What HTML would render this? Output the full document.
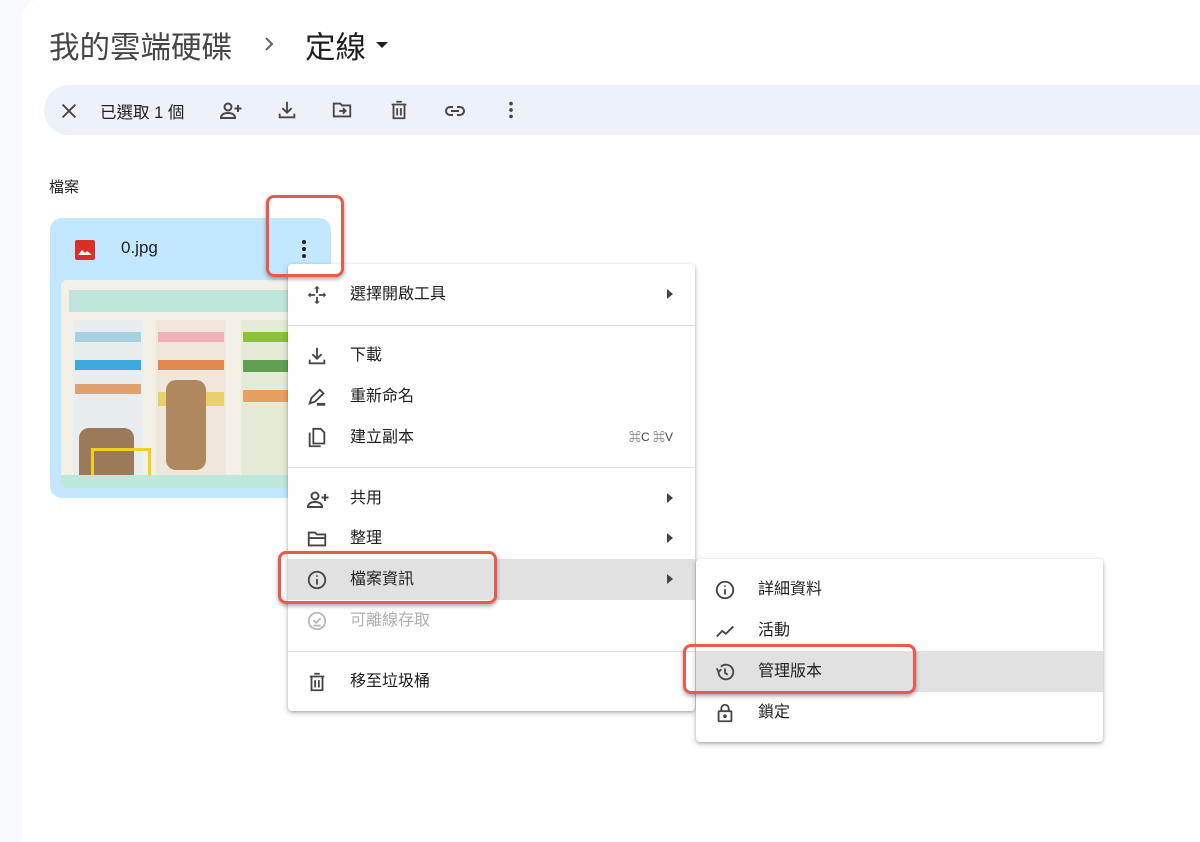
<!DOCTYPE html>
<html><head><meta charset="utf-8"><style>
*{margin:0;padding:0;box-sizing:border-box}
body{width:1200px;height:842px;overflow:hidden;background:#f8fafd;font-family:"Liberation Sans","Noto Sans CJK TC",sans-serif;color:#1f1f1f;position:relative}
.main{position:absolute;left:22px;top:0;right:0;bottom:0;background:#fff;border-top-left-radius:18px}
.abs{position:absolute}
.bc{position:absolute;top:23px;font-size:30.5px;color:#444746}
.tb{position:absolute;left:44px;top:85px;right:0;height:50px;background:#edf2fa;border-radius:25px 0 0 25px}
.ic{position:absolute}
svg{display:block}
.menu{position:absolute;background:#fff;border-radius:4px;box-shadow:0 2px 6px rgba(0,0,0,.25),0 1px 2px rgba(0,0,0,.15)}
.it{position:absolute;left:0;right:0;height:41px;font-size:16px;line-height:41px}
.it .t{position:absolute;left:62px}
.it svg{position:absolute;left:18px;top:10px}
.hl{background:#e1e1e1}
.div{position:absolute;left:0;right:0;height:1px;background:#dadce0}
.arr{position:absolute;right:22px;top:15px;width:0;height:0;border-left:6px solid #444;border-top:5px solid transparent;border-bottom:5px solid transparent}
.red{position:absolute;border:3px solid #ea5a4c;border-radius:8px;box-shadow:0 2px 4px rgba(0,0,0,.35)}
</style></head><body>
<div class="main"></div>
<div class="bc" style="left:49px">我的雲端硬碟</div>
<svg class="ic" style="left:262px;top:36px" width="14" height="16" viewBox="0 0 14 16"><path d="M4 2l6 6-6 6" fill="none" stroke="#5f6368" stroke-width="2"/></svg>
<div class="bc" style="left:305px;color:#1f1f1f">定線</div>
<div class="abs" style="left:376px;top:42px;border-top:6px solid #1f1f1f;border-left:6px solid transparent;border-right:6px solid transparent"></div>

<div class="tb"></div>
<svg class="ic" style="left:58px;top:100px" width="22" height="22" viewBox="0 0 24 24"><path d="M5 5L19 19M19 5L5 19" stroke="#444746" stroke-width="2"/></svg>
<div class="abs" style="left:100px;top:99px;font-size:16.5px;color:#1f1f1f">已選取 1 個</div>
<svg class="ic" style="left:219px;top:99px" width="24" height="24" viewBox="0 0 24 24" fill="none" stroke="#444746" stroke-width="2"><circle cx="9" cy="8" r="3.5"/><path d="M2 19c0-3.5 3-5 7-5s7 1.5 7 5z"/><path d="M19 6v7M15.5 9.5h7"/></svg>
<svg class="ic" style="left:276px;top:99px" width="22" height="22" viewBox="0 0 24 24" fill="none" stroke="#444746" stroke-width="2"><path d="M12 3v12M7 10l5 5 5-5M4 16v4h16v-4"/></svg>
<svg class="ic" style="left:331px;top:99px" width="22" height="22" viewBox="0 0 24 24" fill="none" stroke="#444746" stroke-width="2"><path d="M3 5h7l2 2h9v12H3z"/><path d="M9 13h6M13 10l3 3-3 3"/></svg>
<svg class="ic" style="left:388px;top:99px" width="22" height="22" viewBox="0 0 24 24" fill="none" stroke="#444746" stroke-width="2"><path d="M4 6h16M9 3h6M6 6v15h12V6M10 10v8M14 10v8"/></svg>
<svg class="ic" style="left:443px;top:99px" width="24" height="24" viewBox="0 0 24 24" fill="none" stroke="#444746" stroke-width="2"><path d="M10 8H7a4 4 0 000 8h3M14 8h3a4 4 0 010 8h-3M8 12h8"/></svg>
<svg class="ic" style="left:500px;top:99px" width="22" height="22" viewBox="0 0 24 24" fill="#444746"><circle cx="12" cy="5" r="2"/><circle cx="12" cy="12" r="2"/><circle cx="12" cy="19" r="2"/></svg>

<div class="abs" style="left:49px;top:176px;font-size:15px;color:#1f1f1f">檔案</div>

<div class="abs" style="left:50px;top:218px;width:281px;height:280px;background:#c2e7ff;border-radius:12px"></div>
<svg class="ic" style="left:73px;top:238px" width="24" height="24" viewBox="0 0 24 24"><rect x="2" y="2" width="20" height="20" rx="2" fill="#d93025"/><path d="M5 17l4-5 3 3 2-2 5 4z" fill="#fff"/></svg>
<div class="abs" style="left:121px;top:238px;font-size:17px">0.jpg</div>
<svg class="ic" style="left:292px;top:237px" width="24" height="24" viewBox="0 0 24 24" fill="#1f1f1f"><circle cx="12" cy="5" r="2"/><circle cx="12" cy="12" r="2"/><circle cx="12" cy="19" r="2"/></svg>
<div class="abs" style="left:61px;top:280px;width:240px;height:208px;border-radius:6px;overflow:hidden;background:#f3f0e8">
 <div class="abs" style="left:8px;top:10px;width:232px;height:22px;background:#bfe6dc"></div>
 <div class="abs" style="left:12px;top:40px;width:70px;height:170px;background:#e8eef0"></div>
 <div class="abs" style="left:95px;top:40px;width:70px;height:170px;background:#efe6dc"></div>
 <div class="abs" style="left:180px;top:40px;width:60px;height:170px;background:#e4ecd8"></div>
 <div class="abs" style="left:14px;top:52px;width:66px;height:10px;background:#a8d0e0"></div>
 <div class="abs" style="left:14px;top:80px;width:66px;height:10px;background:#3ea9e0"></div>
 <div class="abs" style="left:14px;top:104px;width:66px;height:10px;background:#e0a070"></div>
 <div class="abs" style="left:97px;top:52px;width:66px;height:10px;background:#f0b0b8"></div>
 <div class="abs" style="left:97px;top:80px;width:66px;height:10px;background:#e08a50"></div>
 <div class="abs" style="left:97px;top:112px;width:66px;height:14px;background:#e8d070"></div>
 <div class="abs" style="left:182px;top:52px;width:58px;height:10px;background:#8cc040"></div>
 <div class="abs" style="left:182px;top:80px;width:58px;height:12px;background:#60a050"></div>
 <div class="abs" style="left:182px;top:110px;width:58px;height:12px;background:#e8a060"></div>
 <div class="abs" style="left:105px;top:100px;width:40px;height:90px;background:#b08860;border-radius:10px"></div>
 <div class="abs" style="left:18px;top:148px;width:55px;height:60px;background:#9a7a58;border-radius:10px"></div>
 <div class="abs" style="left:30px;top:168px;width:60px;height:30px;border:3px solid #f0d020"></div>
 <div class="abs" style="left:0;top:195px;width:240px;height:13px;background:#bfe8dc"></div>
</div>

<div class="menu" style="left:288px;top:264px;width:407px;height:447px">
 <div class="it" style="top:10px"><svg width="22" height="22" viewBox="0 0 24 24" fill="#444746"><path d="M12 2l3 3h-2v5h-2V5H9zM12 22l-3-3h2v-5h2v5h2zM2 12l3-3v2h5v2H5v2zM22 12l-3 3v-2h-5v-2h5V9z"/></svg><span class="t">選擇開啟工具</span><div class="arr"></div></div>
 <div class="div" style="top:61px"></div>
 <div class="it" style="top:71px"><svg width="22" height="22" viewBox="0 0 24 24" fill="none" stroke="#444746" stroke-width="2"><path d="M12 3v12M7 10l5 5 5-5M4 16v4h16v-4"/></svg><span class="t">下載</span></div>
 <div class="it" style="top:112px"><svg width="22" height="22" viewBox="0 0 24 24" fill="none" stroke="#444746" stroke-width="2"><path d="M4 19l2-6L15 4l4 4-9 9z"/><path d="M12 20h9" stroke-width="3"/></svg><span class="t">重新命名</span></div>
 <div class="it" style="top:153px"><svg width="22" height="22" viewBox="0 0 24 24" fill="none" stroke="#444746" stroke-width="2"><path d="M4 6v15h12"/><path d="M8 2h8l4 4v12H8z"/></svg><span class="t">建立副本</span><span style="position:absolute;right:22px;font-size:12px;color:#444">⌘C ⌘V</span></div>
 <div class="div" style="top:203px"></div>
 <div class="it" style="top:214px"><svg width="24" height="24" viewBox="0 0 24 24" fill="none" stroke="#444746" stroke-width="2"><circle cx="9" cy="8" r="3.5"/><path d="M2 19c0-3.5 3-5 7-5s7 1.5 7 5z"/><path d="M19 6v7M15.5 9.5h7"/></svg><span class="t">共用</span><div class="arr"></div></div>
 <div class="it" style="top:254px"><svg width="22" height="22" viewBox="0 0 24 24" fill="none" stroke="#444746" stroke-width="2"><path d="M3 5h7l2 2h9v12H3z"/><path d="M3 11h18"/></svg><span class="t">整理</span><div class="arr"></div></div>
 <div class="it hl" style="top:295px"><svg width="22" height="22" viewBox="0 0 24 24" fill="none" stroke="#444746" stroke-width="2"><circle cx="12" cy="12" r="9"/><path d="M12 11v6M12 7v1.5"/></svg><span class="t">檔案資訊</span><div class="arr"></div></div>
 <div class="it" style="top:336px;color:#b0b0b0"><svg width="22" height="22" viewBox="0 0 24 24" fill="none" stroke="#b8b8b8" stroke-width="2"><circle cx="12" cy="12" r="9"/><path d="M8 11l3 3 5-5M8 17h8"/></svg><span class="t">可離線存取</span></div>
 <div class="div" style="top:387px"></div>
 <div class="it" style="top:397px"><svg width="22" height="22" viewBox="0 0 24 24" fill="none" stroke="#444746" stroke-width="2"><path d="M4 6h16M9 3h6M6 6v15h12V6M10 10v8M14 10v8"/></svg><span class="t">移至垃圾桶</span></div>
</div>

<div class="menu" style="left:696px;top:559px;width:407px;height:183px">
 <div class="it" style="top:10px"><svg width="22" height="22" viewBox="0 0 24 24" fill="none" stroke="#444746" stroke-width="2"><circle cx="12" cy="12" r="9"/><path d="M12 11v6M12 7v1.5"/></svg><span class="t">詳細資料</span></div>
 <div class="it" style="top:51px"><svg width="22" height="22" viewBox="0 0 24 24" fill="none" stroke="#444746" stroke-width="2"><path d="M3 18l6-6 4 3 8-8"/></svg><span class="t">活動</span></div>
 <div class="it hl" style="top:92px"><svg width="22" height="22" viewBox="0 0 24 24" fill="none" stroke="#444746" stroke-width="2"><path d="M5 12a8 8 0 1 0 2.5-5.8"/><path d="M3 8l2 4 3-3" /><path d="M12 8v5l3 2"/></svg><span class="t">管理版本</span></div>
 <div class="it" style="top:133px"><svg width="22" height="22" viewBox="0 0 24 24" fill="none" stroke="#444746" stroke-width="2"><rect x="5" y="10" width="14" height="11" rx="1"/><path d="M8 10V7a4 4 0 018 0v3"/><circle cx="12" cy="15.5" r="1" fill="#444746"/></svg><span class="t">鎖定</span></div>
</div>

<div class="red" style="left:266px;top:195px;width:78px;height:82px"></div>
<div class="red" style="left:278px;top:551px;width:219px;height:53px"></div>
<div class="red" style="left:683px;top:644px;width:233px;height:50px"></div>
</body></html>
